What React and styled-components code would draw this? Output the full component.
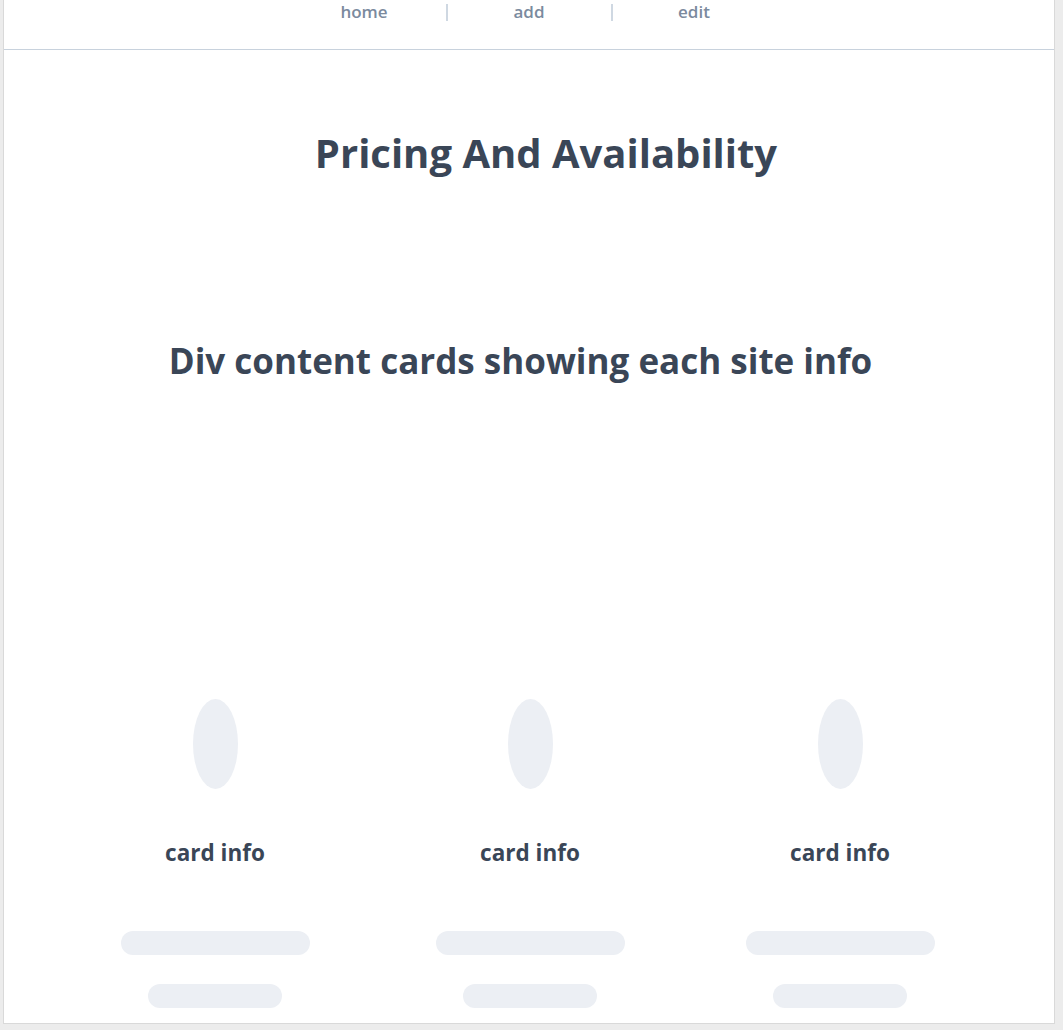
import React from "react";
import styled, { createGlobalStyle } from "styled-components";

const Global = createGlobalStyle`
  html, body { margin: 0; padding: 0; background: #ececec; }
  body { font-family: "Open Sans", "Noto Sans", sans-serif; }
`;

const Page = styled.div`
  padding: 0 8px 6px 3px;
  height: 1030px;
  box-sizing: border-box;
  overflow: hidden;
`;

const Frame = styled.div`
  background: #fff;
  border: 1px solid #d9d9d9;
  border-top: none;
  height: 1024px;
  box-sizing: border-box;
  display: flex;
  flex-direction: column;
`;

const Header = styled.header`
  height: 48px;
  border-bottom: 1px solid #c8d2dd;
  display: flex;
  justify-content: center;
  align-items: flex-start;
  padding-top: 1px;
`;

const NavItem = styled.a`
  width: 163px;
  text-align: center;
  font-size: 17px;
  font-weight: 600;
  line-height: 22px;
  color: #7b8a9e;
  text-decoration: none;
`;

const Sep = styled.span`
  width: 2px;
  height: 17px;
  margin-top: 3px;
  background: #cfd8e2;
`;

const Title = styled.h1`
  margin: 76px 0 0;
  padding-left: 34px;
  text-align: center;
  font-size: 40px;
  font-weight: 700;
  line-height: 54px;
  color: #3a4657;
`;

const Subtitle = styled.h2`
  margin: 158px 0 0;
  padding-right: 17px;
  text-align: center;
  font-size: 35px;
  font-weight: 700;
  line-height: 46px;
  color: #3a4657;
`;

const Cards = styled.div`
  margin: 315px 0 0 53px;
  display: grid;
  grid-template-columns: 316px 314px 306px;
`;

const Card = styled.div`
  display: flex;
  flex-direction: column;
  align-items: center;
`;

const Avatar = styled.div`
  width: 45px;
  height: 90px;
  border-radius: 50%;
  background: #eceff4;
`;

const CardTitle = styled.h3`
  margin: 49px 0 0;
  font-size: 22.5px;
  font-weight: 700;
  line-height: 30px;
  color: #3a4657;
`;

const Bar = styled.div`
  width: ${(p) => p.$w}px;
  height: 24px;
  border-radius: 12px;
  background: #eceff4;
  margin-top: ${(p) => p.$mt}px;
`;

const cards = ["card info", "card info", "card info"];

export default function App() {
  return (
    <>
      <Global />
      <Page>
        <Frame>
          <Header>
            <NavItem>home</NavItem>
            <Sep />
            <NavItem>add</NavItem>
            <Sep />
            <NavItem>edit</NavItem>
          </Header>
          <Title>Pricing And Availability</Title>
          <Subtitle>Div content cards showing each site info</Subtitle>
          <Cards>
            {cards.map((c, i) => (
              <Card key={i}>
                <Avatar />
                <CardTitle>{c}</CardTitle>
                <Bar $w={189} $mt={63} />
                <Bar $w={134} $mt={29} />
              </Card>
            ))}
          </Cards>
        </Frame>
      </Page>
    </>
  );
}
